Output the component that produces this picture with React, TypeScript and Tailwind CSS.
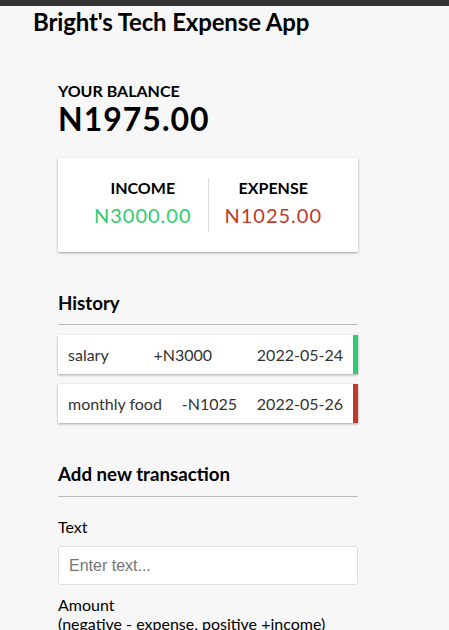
type Transaction = {
  id: number;
  text: string;
  amount: number;
  date: string;
};

const transactions: Transaction[] = [
  { id: 1, text: "salary", amount: 3000, date: "2022-05-24" },
  { id: 2, text: "monthly food", amount: -1025, date: "2022-05-26" },
];

const shadow =
  "shadow-[0_1px_3px_rgba(0,0,0,0.12),0_1px_2px_rgba(0,0,0,0.24)]";

export default function App() {
  const income = transactions
    .filter((t) => t.amount > 0)
    .reduce((acc, t) => acc + t.amount, 0);
  const expense = transactions
    .filter((t) => t.amount < 0)
    .reduce((acc, t) => acc - t.amount, 0);
  const balance = income - expense;

  return (
    <div className="min-h-screen bg-[#f7f7f7] font-['Lato','Liberation_Sans',sans-serif] text-black">
      {/* barra escura no topo */}
      <div className="h-[6px] bg-[#333]" />

      <h2 className="pl-[33px] mt-[2px] text-[24px] font-bold leading-[1.2] tracking-[-0.15px]">
        Bright's Tech Expense App
      </h2>

      <div className="w-[300px] ml-[58px] mt-[44px]">
        {/* Saldo */}
        <h4 className="text-[16px] font-bold uppercase leading-[1.2]">
          Your Balance
        </h4>
        <h1 className="text-[32px] font-bold leading-[1.2] tracking-[1px]">
          N{balance.toFixed(2)}
        </h1>

        {/* Receita / Despesa */}
        <div className={`bg-white ${shadow} p-5 flex my-5`}>
          <div className="flex-1 text-center border-r border-[#dedede]">
            <h4 className="text-[16px] font-bold uppercase leading-[1.2]">
              Income
            </h4>
            <p className="text-[20px] leading-[1.2] tracking-[1px] my-[5px] text-[#2ecc71]">
              N{income.toFixed(2)}
            </p>
          </div>
          <div className="flex-1 text-center">
            <h4 className="text-[16px] font-bold uppercase leading-[1.2]">
              Expense
            </h4>
            <p className="text-[20px] leading-[1.2] tracking-[1px] my-[5px] text-[#c0392b]">
              N{expense.toFixed(2)}
            </p>
          </div>
        </div>

        {/* Historico */}
        <h3 className="text-[18.72px] font-bold leading-[1.2] border-b border-[#bbb] pb-[10px] mt-10 mb-[10px]">
          History
        </h3>
        <ul className="mb-10">
          {transactions.map((t) => (
            <li
              key={t.id}
              className={`bg-white ${shadow} text-[#333] flex justify-between p-[10px] my-[10px] text-[16px] leading-[1.2] border-r-[5px] ${
                t.amount < 0 ? "border-[#c0392b]" : "border-[#2ecc71]"
              }`}
            >
              <span>{t.text}</span>
              <span>
                {t.amount < 0 ? "-" : "+"}N{Math.abs(t.amount)}
              </span>
              <span>{t.date}</span>
            </li>
          ))}
        </ul>

        {/* Nova transacao */}
        <h3 className="text-[18.72px] font-bold leading-[1.2] border-b border-[#bbb] pb-[10px] mt-10 mb-[10px]">
          Add new transaction
        </h3>
        <form>
          <div>
            <label className="inline-block my-[10px] text-[16px] leading-[1.2]">
              Text
            </label>
            <input
              type="text"
              placeholder="Enter text..."
              className="block w-full bg-white border border-[#dedede] rounded-[2px] p-[10px] text-[16px] leading-[17px] font-['Liberation_Sans',Arial,sans-serif] placeholder:text-[#757575]"
            />
          </div>
          <div>
            <label className="inline-block my-[10px] text-[16px] leading-[1.2]">
              Amount <br />
              (negative - expense, positive +income)
            </label>
          </div>
        </form>
      </div>
    </div>
  );
}
